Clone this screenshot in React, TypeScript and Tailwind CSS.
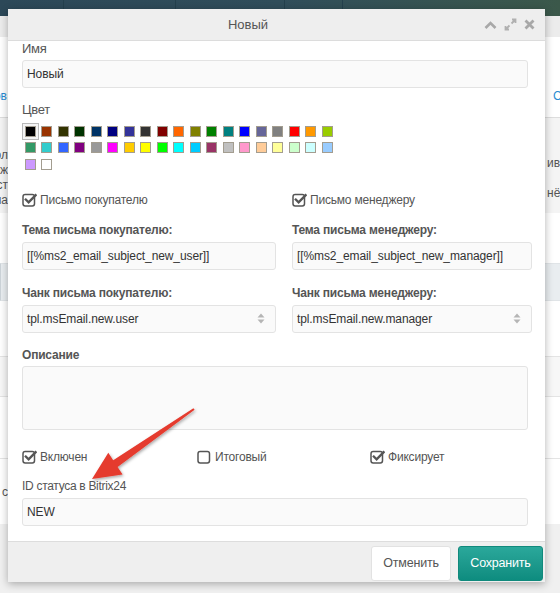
import React from 'react';

const row1 = ['#000000', '#993300', '#333300', '#003300', '#003366', '#000080', '#333399', '#333333', '#800000', '#FF6600', '#808000', '#008000', '#008080', '#0000FF', '#666699', '#808080', '#FF0000', '#FF9900', '#99CC00'];
const row2 = ['#339966', '#33CCCC', '#3366FF', '#800080', '#999999', '#FF00FF', '#FFCC00', '#FFFF00', '#00FF00', '#00FFFF', '#00CCFF', '#993366', '#C0C0C0', '#FF99CC', '#FFCC99', '#FFFF99', '#CCFFCC', '#CCFFFF', '#99CCFF'];
const row3 = ['#CC99FF', '#FFFFFF'];

function CheckIcon({ checked }: { checked: boolean }) {
  return (
    <svg width="15" height="15" viewBox="0 0 15 15" className="shrink-0">
      <rect x="1" y="2.5" width="11.5" height="11.5" rx="2.2" fill="none" stroke="#555" strokeWidth="1.5" />
      {checked && <path d="M3.8 7.6 L6.6 10.4 L13.6 3.2" fill="none" stroke="#555" strokeWidth="2.3" strokeLinecap="square" />}
    </svg>
  );
}

function Checkbox({ label, checked }: { label: string; checked: boolean }) {
  return (
    <div className="flex items-center gap-[3px] h-[18px] text-[12px] tracking-[-0.2px] text-[#555]">
      <CheckIcon checked={checked} />
      <span>{label}</span>
    </div>
  );
}

function SortIcon() {
  return (
    <svg width="8" height="11" viewBox="0 0 8 11">
      <path d="M4 0.5 L7.5 4.5 L0.5 4.5 Z" fill="#b5b5b5" />
      <path d="M4 10.5 L7.5 6.5 L0.5 6.5 Z" fill="#b5b5b5" />
    </svg>
  );
}

function Swatch({ color, selected }: { color: string; selected?: boolean }) {
  return (
    <div className={`w-[16.5px] h-[16.5px] flex items-center justify-center ${selected ? 'border border-[#b8b8b8] bg-[#f4f4f4]' : ''}`}>
      <div className="w-[11px] h-[11px] border border-[#a39d90]" style={{ backgroundColor: color }} />
    </div>
  );
}

function Background() {
  return (
    <div className="flex flex-col h-full text-[12px]">
      <div className="h-[16px] flex bg-gradient-to-r from-[#2c4858] via-[#304d5a] to-[#3b584a]">
        <div className="w-[64px] border-r border-[#24404d]" />
        <div className="w-[112px] border-r border-[#24404d]" />
        <div className="w-[109px] border-r border-[#24404d]" />
        <div className="w-[58px] border-r border-[#24404d]" />
      </div>
      <div className="h-[21px] bg-[#ececec]" />
      <div className="h-[81px] bg-white border-b border-[#dddddd] flex items-end justify-between pb-[12px]">
        <div className="w-[7px] overflow-hidden flex justify-end text-[#2a8bd2] whitespace-nowrap">Нов</div>
        <div className="w-[7px] overflow-hidden text-[#2a8bd2] whitespace-nowrap">Со</div>
      </div>
      <div className="h-[95px] bg-[#f4f4f4] flex justify-between pt-[30px] text-[#555]">
        <div className="w-[8px] overflow-hidden flex flex-col items-end leading-[15px] whitespace-nowrap">
          <span>Пол</span>
          <span>ож</span>
          <span>ст</span>
          <span>на</span>
        </div>
        <div className="w-[13px] overflow-hidden flex flex-col leading-[30px] whitespace-nowrap">
          <span>ив</span>
          <span>нё</span>
        </div>
      </div>
      <div className="h-[50px] bg-white" />
      <div className="h-[38px] bg-[#e9edf0] border-l border-[#ccd3d8] border-y border-y-[#e0e4e7]" />
      <div className="h-[56px] bg-white border-b border-[#e4e4e4]" />
      <div className="h-[40px] bg-[#f7f7f7] border-b border-[#e4e4e4]" />
      <div className="h-[62px] bg-white border-b border-[#e4e4e4]" />
      <div className="h-[65px] bg-white flex items-center">
        <div className="w-[8px] overflow-hidden flex justify-end text-[#555] whitespace-nowrap">с</div>
      </div>
      <div className="flex-1 bg-[#f0f0f0]" />
    </div>
  );
}

function RedArrow() {
  return (
    <svg className="absolute left-0 top-0 pointer-events-none" width="560" height="593" viewBox="0 0 560 593">
      <defs>
        <filter id="sh" x="-20%" y="-20%" width="140%" height="140%">
          <feDropShadow dx="1" dy="1.5" stdDeviation="1.5" floodColor="#000" floodOpacity="0.35" />
        </filter>
      </defs>
      <polygon
        points="194.6,409.8 117.6,466.9 122.6,474.4 92,479 108.3,452.8 113.2,460.3 193.4,408.2"
        fill="#e53b2f"
        filter="url(#sh)"
      />
    </svg>
  );
}

const inputCls = 'h-[28px] flex items-center px-[4px] bg-[#fafafa] border border-[#e3e3e3] rounded-[3px] text-[#333] text-[12px] tracking-[-0.1px]';

export default function App() {
  return (
    <div className="relative w-[560px] h-[593px] overflow-hidden bg-[#f0f0f0] font-['Liberation_Sans',Arial,sans-serif]">
      <Background />

      {/* Window */}
      <div className="absolute left-[8px] top-[9px] w-[537px] h-[573px] flex flex-col bg-white shadow-[0_2px_8px_rgba(0,0,0,0.3)]">
        {/* Header */}
        <div className="h-[32px] shrink-0 flex items-center bg-[#eeeeee] border-b border-[#dcdcdc]">
          <div className="flex-1 text-center text-[13px] text-[#555] pl-[4px]">Новый</div>
          <div className="flex items-center gap-[7px] pr-[10px]">
            <svg width="13" height="10" viewBox="0 0 13 10">
              <path d="M1.5 8 L6.5 3 L11.5 8" fill="none" stroke="#a8a8a8" strokeWidth="2.6" />
            </svg>
            <svg width="13" height="13" viewBox="0 0 13 13">
              <path d="M7.5 5.5 L11 2 M8 1.5 L11.5 1.5 L11.5 5 M5.5 7.5 L2 11 M1.5 8 L1.5 11.5 L5 11.5" fill="none" stroke="#b0b0b0" strokeWidth="1.8" />
            </svg>
            <svg width="11" height="11" viewBox="0 0 11 11">
              <path d="M1.5 1.5 L9.5 9.5 M9.5 1.5 L1.5 9.5" fill="none" stroke="#a8a8a8" strokeWidth="2.8" />
            </svg>
          </div>
        </div>

        {/* Body */}
        <div className="flex-1 flex flex-col pl-[14px] pr-[17px] text-[12px] tracking-[-0.2px] text-[#555]">
          <label className="h-[16px] leading-[16px] text-[13px] tracking-[-0.3px]">Имя</label>
          <div className={`mt-[3px] ${inputCls}`}>Новый</div>

          <label className="mt-[14px] h-[16px] leading-[16px] text-[13px] tracking-[-0.3px]">Цвет</label>
          <div className="mt-[5px] flex flex-col">
            <div className="flex">
              {row1.map((c, i) => <Swatch key={c} color={c} selected={i === 0} />)}
            </div>
            <div className="flex">
              {row2.map((c) => <Swatch key={c} color={c} />)}
            </div>
            <div className="flex">
              {row3.map((c) => <Swatch key={c} color={c} />)}
            </div>
          </div>

          <div className="mt-[18px] flex">
            <div className="w-[254px]"><Checkbox label="Письмо покупателю" checked /></div>
            <div className="ml-[16px]"><Checkbox label="Письмо менеджеру" checked /></div>
          </div>

          <div className="mt-[13px] flex gap-[16px] -mr-[4px]">
            <div className="w-[254px] flex flex-col">
              <label className="h-[16px] leading-[16px] font-bold">Тема письма покупателю:</label>
              <div className={`mt-[4px] ${inputCls}`}>[[%ms2_email_subject_new_user]]</div>
              <label className="mt-[15px] h-[16px] leading-[16px] font-bold">Чанк письма покупателю:</label>
              <div className={`mt-[4px] ${inputCls} justify-between pr-[10px]`}>
                <span>tpl.msEmail.new.user</span>
                <SortIcon />
              </div>
            </div>
            <div className="flex-1 flex flex-col">
              <label className="h-[16px] leading-[16px] font-bold">Тема письма менеджеру:</label>
              <div className={`mt-[4px] ${inputCls}`}>[[%ms2_email_subject_new_manager]]</div>
              <label className="mt-[15px] h-[16px] leading-[16px] font-bold">Чанк письма менеджеру:</label>
              <div className={`mt-[4px] ${inputCls} justify-between pr-[10px]`}>
                <span>tpl.msEmail.new.manager</span>
                <SortIcon />
              </div>
            </div>
          </div>

          <label className="mt-[14px] h-[16px] leading-[16px] font-bold">Описание</label>
          <div className="mt-[3px] h-[64px] bg-[#fafafa] border border-[#e3e3e3] rounded-[3px]" />

          <div className="mt-[18px] flex">
            <div className="w-[175px]"><Checkbox label="Включен" checked /></div>
            <div className="w-[173px]"><Checkbox label="Итоговый" checked={false} /></div>
            <div><Checkbox label="Фиксирует" checked /></div>
          </div>

          <label className="mt-[12px] h-[16px] leading-[16px] tracking-[-0.3px]">ID статуса в Bitrix24</label>
          <div className={`mt-[4px] ${inputCls}`}>NEW</div>
        </div>

        {/* Footer */}
        <div className="h-[41px] shrink-0 flex items-center justify-end gap-[7px] pr-[2px] pt-[2px] bg-[#efefef] border-t border-[#dddddd]">
          <button className="w-[80px] h-[35px] bg-white border border-[#e2e2e2] rounded-[3px] text-[12.5px] tracking-[-0.2px] text-[#555]">Отменить</button>
          <button className="w-[85px] h-[35px] rounded-[3px] text-[12.5px] tracking-[-0.2px] text-white bg-gradient-to-b from-[#2aa89b] to-[#0d8c7f] border border-[#10897c]">Сохранить</button>
        </div>
      </div>

      <RedArrow />
    </div>
  );
}
